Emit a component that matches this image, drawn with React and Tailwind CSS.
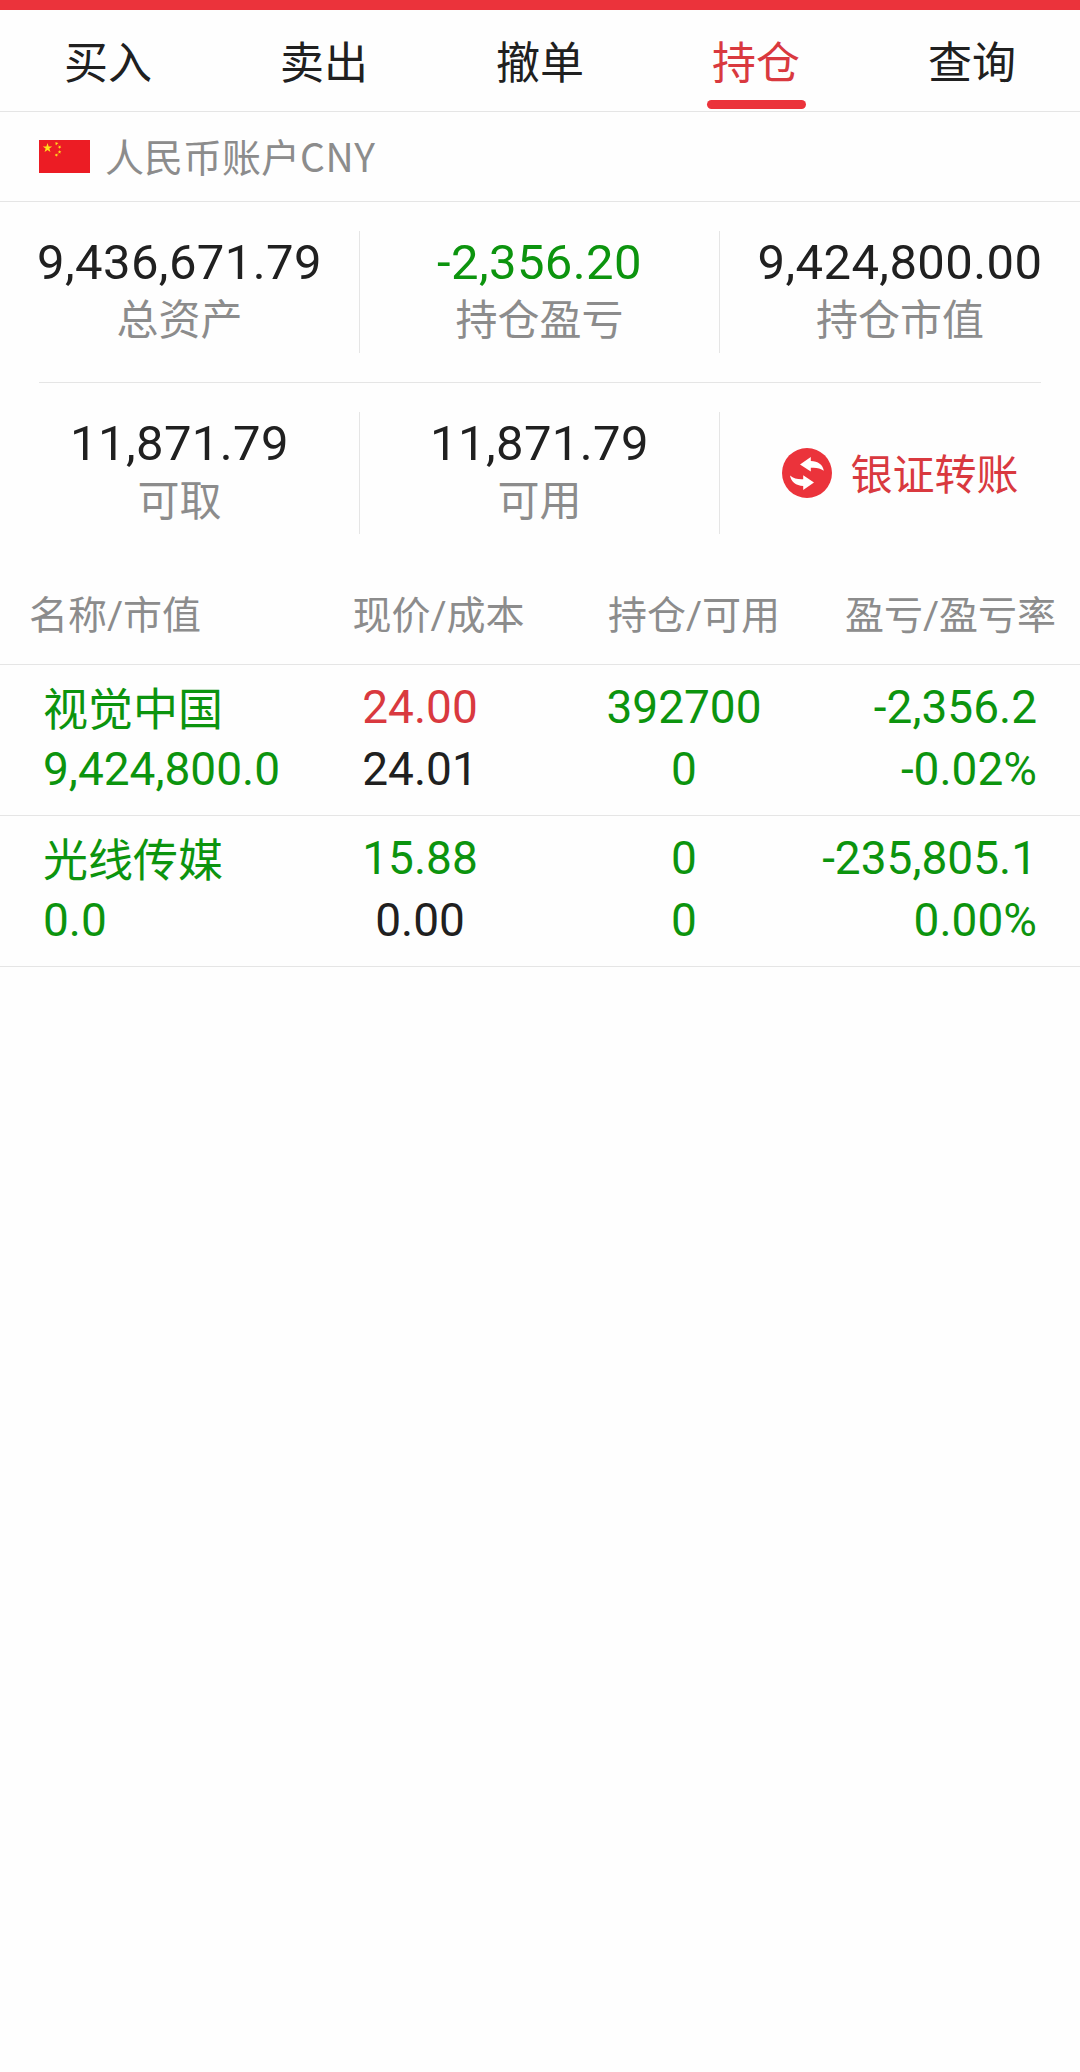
import React from 'react';
import clsx from 'clsx';

const TABS = ['买入', '卖出', '撤单', '持仓', '查询'];

const HOLDINGS = [
  {
    name: '视觉中国', value: '9,424,800.0',
    price: '24.00', priceUp: true, cost: '24.01',
    held: '392700', usable: '0',
    profit: '-2,356.2', rate: '-0.02%',
  },
  {
    name: '光线传媒', value: '0.0',
    price: '15.88', priceUp: false, cost: '0.00',
    held: '0', usable: '0',
    profit: '-235,805.1', rate: '0.00%',
  },
];

const STAR = '0,-1 0.225,-0.309 0.951,-0.309 0.363,0.118 0.588,0.809 0,0.382 -0.588,0.809 -0.363,0.118 -0.951,-0.309 -0.225,-0.309';

function Flag() {
  return (
    <svg className="h-[33px] w-[51px] shrink-0" viewBox="0 0 51 33">
      <rect width="51" height="33" fill="#ec1c24" />
      <g fill="#ffe11a">
        <polygon points={STAR} transform="translate(8.5 8) scale(5)" />
        <polygon points={STAR} transform="translate(17.5 3.5) rotate(23) scale(2)" />
        <polygon points={STAR} transform="translate(20.5 7) rotate(46) scale(2)" />
        <polygon points={STAR} transform="translate(20.5 12) rotate(70) scale(2)" />
        <polygon points={STAR} transform="translate(17.5 15) rotate(21) scale(2)" />
      </g>
    </svg>
  );
}

function TransferIcon() {
  return (
    <svg className="size-[50px] shrink-0" viewBox="0 0 50 50">
      <circle cx="25" cy="25" r="25" fill="#eb333b" />
      <path
        d="M18 16.4 L28.8 9 V13 C36 13.2 41 16.8 41.8 22.8 C38.4 20 34 19.4 28.8 19.8 V23.6 Z"
        fill="#fff"
      />
      <path
        d="M32 34.6 L21.2 42 V38 C14 37.8 9 34 8 27.6 C11.6 30.8 16 31.4 21.2 31.2 V27.2 Z"
        fill="#fff"
      />
    </svg>
  );
}

function Stat({ value, label, green, divider }) {
  return (
    <div className={clsx('h-[122px] w-[360px] pt-[2px] text-center', divider && 'border-r border-[#e5e5e5]')}>
      <div
        className={clsx(
          "font-['Roboto','Noto_Sans_CJK_SC',sans-serif] text-[49px] leading-[60px] tracking-[0.4px]",
          green ? 'text-[#0c940e]' : 'text-[#202020]',
        )}
      >
        {value}
      </div>
      <div className="text-[42px] leading-[48px] text-[#8c8c8c]">{label}</div>
    </div>
  );
}

function Holding({ item }) {
  return (
    <div className="grid h-[151px] grid-cols-[303px_234px_294px_206px] border-b border-[#e5e5e5] pt-[11px] font-['Roboto','Noto_Sans_CJK_SC',sans-serif] text-[46px] leading-[62px] text-[#0c940e]">
      <div className="pl-[43px]">
        <div className="pt-[7px] text-[45px] leading-[55px]">{item.name}</div>
        <div>{item.value}</div>
      </div>
      <div className="text-center">
        <div className={clsx(item.priceUp && 'text-[#d9393f]')}>{item.price}</div>
        <div className="text-[#202020]">{item.cost}</div>
      </div>
      <div className="text-center">
        <div>{item.held}</div>
        <div>{item.usable}</div>
      </div>
      <div className="flex flex-col items-end whitespace-nowrap">
        <div>{item.profit}</div>
        <div>{item.rate}</div>
      </div>
    </div>
  );
}

export default function App() {
  return (
    <div className="min-h-[2072px] w-[1080px] bg-[#fefefe] font-['Noto_Sans_CJK_SC',sans-serif] font-normal">
      <div className="h-[10px] bg-[#eb333b]" />
      <nav className="flex h-[102px] border-b border-[#e5e5e5]">
        {TABS.map((tab) => {
          const active = tab === '持仓';
          return (
            <div key={tab} className="flex flex-1 flex-col items-center pt-[17px]">
              <span className={clsx('text-[44px] leading-[66px]', active ? 'text-[#d9393f]' : 'text-[#202020]')}>
                {tab}
              </span>
              {active && <div className="mt-[7px] h-[9px] w-[99px] rounded-full bg-[#eb333b]" />}
            </div>
          );
        })}
      </nav>

      <div className="flex h-[90px] items-center border-b border-[#e5e5e5] pl-[39px]">
        <Flag />
        <span className="mb-[4px] ml-[15px] text-[39px] leading-[58px] text-[#8c8c8c]">
          人民币账户<span className="tracking-[0.6px]">CNY</span>
        </span>
      </div>

      <div className="flex pt-[29px] pb-[29px]">
        <Stat value="9,436,671.79" label="总资产" divider />
        <Stat value="-2,356.20" label="持仓盈亏" green divider />
        <Stat value="9,424,800.00" label="持仓市值" />
      </div>
      <div className="mx-[39px] h-px bg-[#e5e5e5]" />
      <div className="flex pt-[29px]">
        <Stat value="11,871.79" label="可取" divider />
        <Stat value="11,871.79" label="可用" divider />
        <div className="flex h-[122px] w-[360px] items-center justify-center gap-[18px] pl-px">
          <TransferIcon />
          <span className="mb-[3px] text-[42px] leading-[60px] text-[#d9393f]">银证转账</span>
        </div>
      </div>

      <div className="grid h-[131px] grid-cols-[323px_231px_280px_222px] border-b border-[#e5e5e5] pt-[50px] font-['Roboto','Noto_Sans_CJK_SC',sans-serif] text-[39px] leading-[64px] text-[#8c8c8c]">
        <div className="pl-[29px]">名称/市值</div>
        <div className="text-center">现价/成本</div>
        <div className="text-center">持仓/可用</div>
        <div className="text-right">盈亏/盈亏率</div>
      </div>
      {HOLDINGS.map((item) => (
        <Holding key={item.name} item={item} />
      ))}
    </div>
  );
}
